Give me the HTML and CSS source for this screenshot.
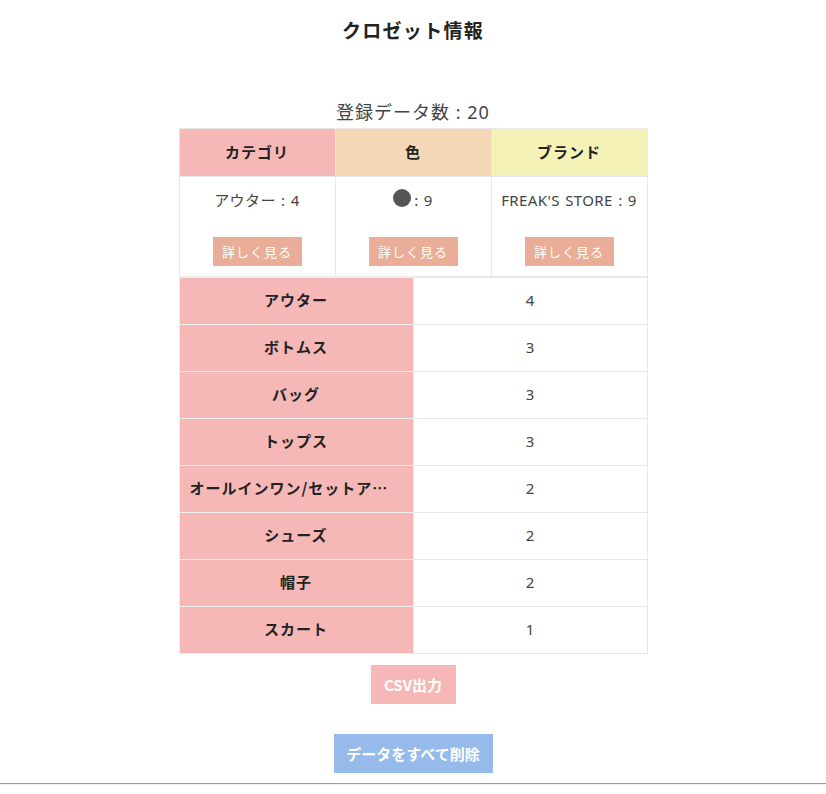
FILE: index.html
```html
<!DOCTYPE html>
<html lang="ja">
<head>
<meta charset="utf-8">
<title>クロゼット情報</title>
<link rel="stylesheet" href="styles.css">
</head>
<body>
<main class="page">
  <h1 class="title">クロゼット情報</h1>
  <p class="count">登録データ数 : 20</p>
  <table class="summary">
    <thead>
      <tr>
        <th class="h-cat">カテゴリ</th>
        <th class="h-color">色</th>
        <th class="h-brand">ブランド</th>
      </tr>
    </thead>
    <tbody>
      <tr>
        <td>
          <div class="top-val">アウター : 4</div>
          <button class="detail-btn">詳しく見る</button>
        </td>
        <td>
          <div class="top-val"><span class="dot"></span>: 9</div>
          <button class="detail-btn">詳しく見る</button>
        </td>
        <td>
          <div class="top-val">FREAK'S STORE : 9</div>
          <button class="detail-btn">詳しく見る</button>
        </td>
      </tr>
    </tbody>
  </table>
  <table class="list">
    <tbody>
      <tr><th><div class="name">アウター</div></th><td>4</td></tr>
      <tr><th><div class="name">ボトムス</div></th><td>3</td></tr>
      <tr><th><div class="name">バッグ</div></th><td>3</td></tr>
      <tr><th><div class="name">トップス</div></th><td>3</td></tr>
      <tr><th><div class="name">オールインワン/セットアップ</div></th><td>2</td></tr>
      <tr><th><div class="name">シューズ</div></th><td>2</td></tr>
      <tr><th><div class="name">帽子</div></th><td>2</td></tr>
      <tr><th><div class="name">スカート</div></th><td>1</td></tr>
    </tbody>
  </table>
  <button class="csv-btn">CSV出力</button>
  <button class="delete-btn">データをすべて削除</button>
</main>
<hr class="footer-line">
</body>
</html>
```
FILE: styles.css
```css
* { box-sizing: border-box; }
body {
  margin: 0;
  font-family: "Noto Sans CJK JP", "Noto Sans", sans-serif;
  color: #333;
  background: #fff;
}
.page {
  display: flex;
  flex-direction: column;
  align-items: center;
  padding-top: 15px;
}
.title {
  margin: 0;
  font-size: 19px;
  line-height: 30px;
  font-weight: 700;
  color: #222;
  letter-spacing: 1.3px;
}
.count {
  margin: 54px 0 0;
  font-family: "Noto Sans", "Noto Sans CJK JP", sans-serif;
  font-size: 18px;
  line-height: 26px;
  color: #444;
  font-weight: 400;
  letter-spacing: 1px;
}
.summary, .list {
  border-collapse: collapse;
  width: 469px;
  table-layout: fixed;
}
.summary {
  margin-top: 3px;
}
.summary th {
  height: 48px;
  border: 1px solid #e8e8e8;
  font-size: 15px;
  font-weight: 700;
  color: #222;
  padding: 0 0 2px;
  letter-spacing: 1px;
}
.h-cat { background: #f5b8b6; }
.h-color { background: #f5d8b8; }
.h-brand { background: #f5f2b8; }
.summary td {
  border: 1px solid #e8e8e8;
  text-align: center;
  padding: 11px 0 10px;
  vertical-align: top;
}
.top-val {
  font-family: "Noto Sans", "Noto Sans CJK JP", sans-serif;
  font-size: 15px;
  line-height: 24px;
  height: 24px;
  color: #444;
  white-space: nowrap;
  display: flex;
  align-items: center;
  justify-content: center;
  gap: 3px;
  letter-spacing: 0.4px;
  word-spacing: 1px;
}
.dot {
  width: 18px;
  height: 18px;
  border-radius: 50%;
  background: #555;
  display: inline-block;
  margin-top: -4px;
}
.detail-btn {
  margin-top: 25px;
  width: 89px;
  height: 29px;
  border: none;
  background: #eaae98;
  color: #fff;
  font-family: inherit;
  font-size: 13px;
  letter-spacing: 1px;
  padding: 0;
}
.list th, .list td {
  height: 47px;
  border: 1px solid #e8e8e8;
  padding: 0 0 3px;
}
.list th {
  width: 234px;
  background: #f5b8b6;
  border-color: #eeeeee;
  font-size: 15px;
  font-weight: 700;
  color: #222;
  letter-spacing: 1px;
}
.name {
  padding: 0 10px;
  white-space: nowrap;
  overflow: hidden;
  text-overflow: ellipsis;
  text-align: center;
}
.list td {
  text-align: center;
  font-family: "Noto Sans", "Noto Sans CJK JP", sans-serif;
  font-size: 15px;
  color: #444;
}
.csv-btn, .delete-btn {
  border: none;
  color: #fff;
  font-family: inherit;
  font-weight: 700;
  font-size: 15px;
  height: 39px;
  padding: 0;
}
.csv-btn {
  margin-top: 11px;
  width: 85px;
  background: #f5b8b6;
}
.delete-btn {
  margin-top: 30px;
  width: 159px;
  background: #96bbea;
}
.footer-line {
  margin: 10px 0 0;
  border: none;
  border-top: 1px solid #9a9a9a;
  border-bottom: 1px solid #eeeeee;
  height: 0;
}
```
